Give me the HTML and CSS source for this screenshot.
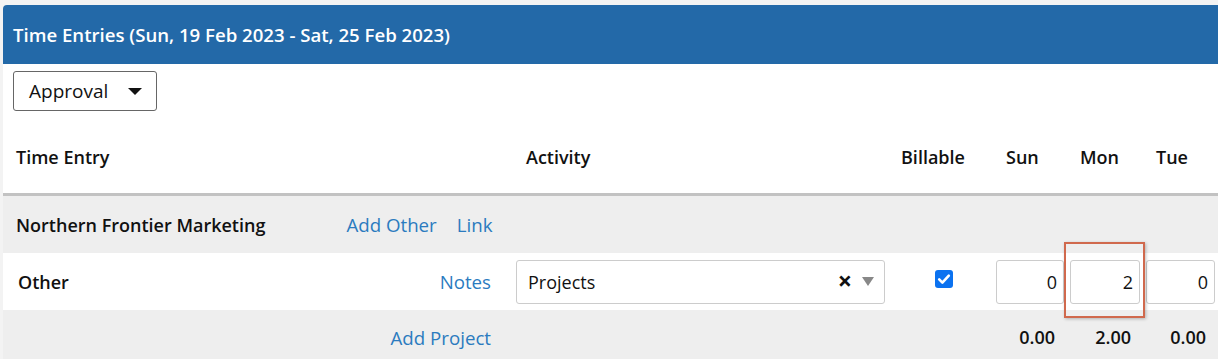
FILE: index.html
```html
<!DOCTYPE html>
<html lang="en">
<head>
  <meta charset="UTF-8">
  <title>Time Entries</title>
  <link rel="stylesheet" href="styles.css">
</head>
<body>

  <div class="panel">
    <div class="panel-title">Time Entries (Sun, 19 Feb 2023 - Sat, 25 Feb 2023)</div>

    <div class="toolbar">
      <button class="dropdown">Approval <span class="caret"></span></button>
    </div>

    <div class="grid head-row">
      <div class="cell">Time Entry</div>
      <div class="cell pad-act">Activity</div>
      <div class="cell pad-bill">Billable</div>
      <div class="cell pad-day">Sun</div>
      <div class="cell pad-day">Mon</div>
      <div class="cell pad-day">Tue</div>
    </div>

    <div class="grid group-row">
      <div class="cell first">
        <span class="client">Northern Frontier Marketing</span>
        <a class="link add-other" href="#">Add Other</a>
        <a class="link" href="#">Link</a>
      </div>
      <div class="cell"></div>
      <div class="cell"></div>
      <div class="cell"></div>
      <div class="cell"></div>
      <div class="cell"></div>
    </div>

    <div class="grid entry-row">
      <div class="cell first split">
        <span class="entry-name">Other</span>
        <a class="link" href="#">Notes</a>
      </div>
      <div class="cell act">
        <div class="select">
          <span class="select-value">Projects</span>
          <span class="select-clear">&times;</span>
          <span class="select-arrow"></span>
        </div>
      </div>
      <div class="cell center">
        <span class="checkbox">
          <svg width="18" height="18" viewBox="0 0 18 18">
            <rect x="0" y="0" width="18" height="18" rx="3" fill="#0b72f0"/>
            <path d="M4.2 9.4 L7.4 12.6 L13.8 5.6" fill="none" stroke="#fff" stroke-width="2.6" stroke-linecap="round" stroke-linejoin="round"/>
          </svg>
        </span>
      </div>
      <div class="cell day"><input class="hours" type="text" value="0"></div>
      <div class="cell day highlight-wrap">
        <input class="hours" type="text" value="2">
        <div class="highlight"></div>
      </div>
      <div class="cell day"><input class="hours" type="text" value="0"></div>
    </div>

    <div class="grid total-row">
      <div class="cell first right">
        <a class="link" href="#">Add Project</a>
      </div>
      <div class="cell"></div>
      <div class="cell"></div>
      <div class="cell total">0.00</div>
      <div class="cell total">2.00</div>
      <div class="cell total">0.00</div>
    </div>
  </div>

</body>
</html>
```

FILE: styles.css
```css
body {
  margin: 0;
  padding: 5px 0 0 3px;
  background: #f3f3f3;
  font-family: "Open Sans", "Noto Sans", sans-serif;
  font-size: 18px;
  color: #111;
  overflow: hidden;
}

.panel {
  background: #ffffff;
  border-top-left-radius: 4px;
  overflow: hidden;
}

.panel-title {
  height: 59px;
  display: flex;
  align-items: center;
  padding-left: 10px;
  background: #2369a8;
  color: #ffffff;
  font-weight: 600;
  font-size: 18.6px;
}

.toolbar {
  height: 56px;
  padding: 7px 10px 0;
  box-sizing: border-box;
}

.dropdown {
  width: 144px;
  height: 40px;
  padding: 0 0 0 15px;
  border: 1px solid #666;
  border-radius: 3px;
  background: #fff;
  font-family: inherit;
  font-size: 19px;
  color: #111;
  display: flex;
  align-items: center;
  gap: 20px;
  cursor: pointer;
}

.caret {
  width: 0;
  height: 0;
  border-left: 7px solid transparent;
  border-right: 7px solid transparent;
  border-top: 7px solid #111;
}

.grid {
  display: grid;
  grid-template-columns: 503px 389px 98px 74px 76px 75px;
}

.cell {
  display: flex;
  align-items: center;
  min-width: 0;
  white-space: nowrap;
}

.cell > * {
  flex-shrink: 0;
}

.head-row {
  height: 73px;
  border-bottom: 3px solid #c2c2c2;
  font-weight: 600;
}

.head-row .cell:first-child {
  padding-left: 13px;
}

.pad-act {
  padding-left: 20px;
}

.pad-bill {
  padding-left: 6px;
}

.pad-day {
  padding-left: 13px;
}

.group-row {
  height: 57px;
  background: #eeeeee;
}

.first {
  padding-left: 13px;
  padding-right: 15px;
}

.client {
  font-weight: 600;
  margin-right: 81px;
}

.link {
  color: #2b7bbf;
  text-decoration: none;
  font-size: 18.7px;
}

.add-other {
  margin-right: 20px;
}

.entry-row {
  height: 57px;
  background: #ffffff;
}

.split {
  justify-content: space-between;
  padding-left: 15px;
}

.entry-name {
  font-weight: 600;
}

.act {
  padding: 0 10px;
}

.select {
  flex: 1;
  flex-shrink: 1;
  height: 44px;
  box-sizing: border-box;
  border: 1px solid #cccccc;
  border-radius: 3px;
  display: flex;
  align-items: center;
  padding: 0 10px 0 11px;
}

.select-value {
  flex: 1;
}

.select-clear {
  font-weight: 700;
  font-size: 25px;
  line-height: 1;
  margin-right: 10px;
  margin-top: -2px;
}

.select-arrow {
  width: 0;
  height: 0;
  border-left: 6px solid transparent;
  border-right: 6px solid transparent;
  border-top: 9px solid #888;
}

.center {
  justify-content: center;
}

.checkbox {
  display: flex;
  margin-top: -6px;
}

.day {
  padding: 0 3px;
}

.day > .hours {
  flex-shrink: 1;
}

.hours {
  width: 100%;
  height: 44px;
  box-sizing: border-box;
  border: 1px solid #cccccc;
  border-radius: 3px;
  padding: 0 6px;
  text-align: right;
  font-family: inherit;
  font-size: 18px;
  color: #111;
  background: #fff;
}

.highlight-wrap {
  position: relative;
}

.highlight {
  position: absolute;
  top: -11px;
  left: -3px;
  width: 81px;
  height: 76px;
  box-sizing: border-box;
  border: 2px solid #d0694d;
  box-shadow: 1px 1px 3px rgba(0, 0, 0, 0.25);
}

.total-row {
  height: 54px;
  background: #eeeeee;
}

.right {
  justify-content: flex-end;
}

.total {
  justify-content: flex-end;
  padding-right: 12px;
  font-weight: 600;
}
```
